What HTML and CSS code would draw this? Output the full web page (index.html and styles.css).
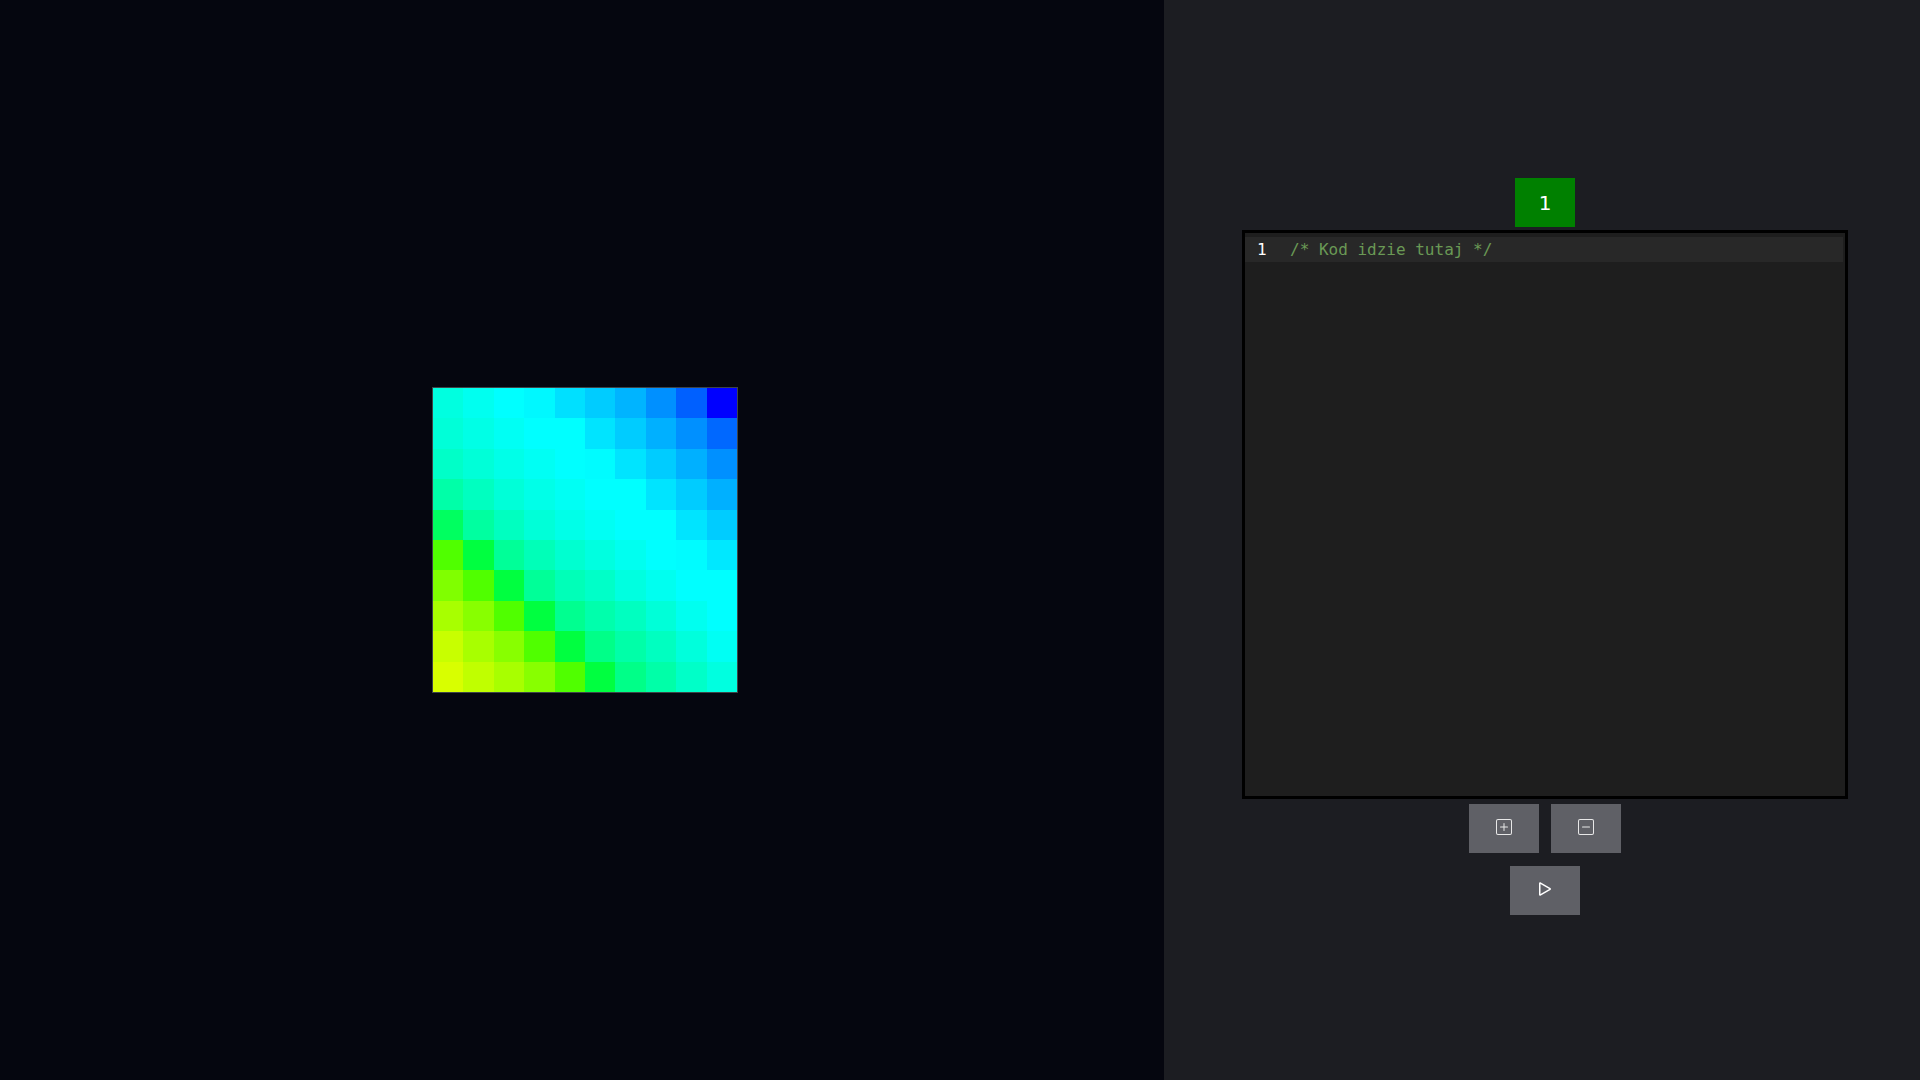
FILE: index.html
```html
<!DOCTYPE html>
<html lang="pl">
<head>
<meta charset="utf-8">
<title>Matryca</title>
<link rel="stylesheet" href="styles.css">
</head>
<body>
<div class="app">
  <section class="stage">
    <div class="matrix">
      <div class="cell" style="background:#00ffe0"></div><div class="cell" style="background:#00fff0"></div><div class="cell" style="background:#00ffff"></div><div class="cell" style="background:#00f8ff"></div><div class="cell" style="background:#00e0ff"></div><div class="cell" style="background:#00ccff"></div><div class="cell" style="background:#00b4ff"></div><div class="cell" style="background:#0090ff"></div><div class="cell" style="background:#0060ff"></div><div class="cell" style="background:#0000ff"></div>
      <div class="cell" style="background:#00ffd8"></div><div class="cell" style="background:#00ffe6"></div><div class="cell" style="background:#00fff4"></div><div class="cell" style="background:#00ffff"></div><div class="cell" style="background:#00ffff"></div><div class="cell" style="background:#00e4ff"></div><div class="cell" style="background:#00ccff"></div><div class="cell" style="background:#00b0ff"></div><div class="cell" style="background:#0090ff"></div><div class="cell" style="background:#0068ff"></div>
      <div class="cell" style="background:#00ffc8"></div><div class="cell" style="background:#00ffd8"></div><div class="cell" style="background:#00ffe8"></div><div class="cell" style="background:#00fff4"></div><div class="cell" style="background:#00ffff"></div><div class="cell" style="background:#00fcff"></div><div class="cell" style="background:#00e4ff"></div><div class="cell" style="background:#00ccff"></div><div class="cell" style="background:#00b0ff"></div><div class="cell" style="background:#0090ff"></div>
      <div class="cell" style="background:#00ffa8"></div><div class="cell" style="background:#00ffc0"></div><div class="cell" style="background:#00ffd8"></div><div class="cell" style="background:#00ffe8"></div><div class="cell" style="background:#00fff4"></div><div class="cell" style="background:#00ffff"></div><div class="cell" style="background:#00ffff"></div><div class="cell" style="background:#00e4ff"></div><div class="cell" style="background:#00ccff"></div><div class="cell" style="background:#00b0ff"></div>
      <div class="cell" style="background:#00ff60"></div><div class="cell" style="background:#00ffa0"></div><div class="cell" style="background:#00ffc0"></div><div class="cell" style="background:#00ffd8"></div><div class="cell" style="background:#00ffe8"></div><div class="cell" style="background:#00fff4"></div><div class="cell" style="background:#00ffff"></div><div class="cell" style="background:#00ffff"></div><div class="cell" style="background:#00e4ff"></div><div class="cell" style="background:#00ccff"></div>
      <div class="cell" style="background:#50ff00"></div><div class="cell" style="background:#00ff40"></div><div class="cell" style="background:#00ff98"></div><div class="cell" style="background:#00ffb8"></div><div class="cell" style="background:#00ffd0"></div><div class="cell" style="background:#00ffe0"></div><div class="cell" style="background:#00fff0"></div><div class="cell" style="background:#00ffff"></div><div class="cell" style="background:#00fcff"></div><div class="cell" style="background:#00e8ff"></div>
      <div class="cell" style="background:#80ff00"></div><div class="cell" style="background:#50ff00"></div><div class="cell" style="background:#00ff40"></div><div class="cell" style="background:#00ff98"></div><div class="cell" style="background:#00ffb8"></div><div class="cell" style="background:#00ffc8"></div><div class="cell" style="background:#00ffe0"></div><div class="cell" style="background:#00fff0"></div><div class="cell" style="background:#00ffff"></div><div class="cell" style="background:#00ffff"></div>
      <div class="cell" style="background:#a8ff00"></div><div class="cell" style="background:#88ff00"></div><div class="cell" style="background:#50ff00"></div><div class="cell" style="background:#00ff40"></div><div class="cell" style="background:#00ff90"></div><div class="cell" style="background:#00ffac"></div><div class="cell" style="background:#00ffc0"></div><div class="cell" style="background:#00ffd8"></div><div class="cell" style="background:#00fff0"></div><div class="cell" style="background:#00ffff"></div>
      <div class="cell" style="background:#c8ff00"></div><div class="cell" style="background:#a8ff00"></div><div class="cell" style="background:#88ff00"></div><div class="cell" style="background:#50ff00"></div><div class="cell" style="background:#00ff40"></div><div class="cell" style="background:#00ff88"></div><div class="cell" style="background:#00ffa8"></div><div class="cell" style="background:#00ffc0"></div><div class="cell" style="background:#00ffdc"></div><div class="cell" style="background:#00fff4"></div>
      <div class="cell" style="background:#d8ff00"></div><div class="cell" style="background:#c0ff00"></div><div class="cell" style="background:#a8ff00"></div><div class="cell" style="background:#88ff00"></div><div class="cell" style="background:#50ff00"></div><div class="cell" style="background:#00ff40"></div><div class="cell" style="background:#00ff88"></div><div class="cell" style="background:#00ffa8"></div><div class="cell" style="background:#00ffc8"></div><div class="cell" style="background:#00ffe0"></div>
    </div>
  </section>
  <section class="side">
    <div class="level">1</div>
    <div class="editor">
      <div class="line current"><span class="ln">1</span><span class="comment">/* Kod idzie tutaj */</span></div>
    </div>
    <div class="zoom-row">
      <button class="btn" type="button" aria-label="Powiększ">
        <svg class="icon-sq" viewBox="0 0 16 16" width="16" height="16" fill="currentColor"><path d="M14 1a1 1 0 0 1 1 1v12a1 1 0 0 1-1 1H2a1 1 0 0 1-1-1V2a1 1 0 0 1 1-1h12zM2 0a2 2 0 0 0-2 2v12a2 2 0 0 0 2 2h12a2 2 0 0 0 2-2V2a2 2 0 0 0-2-2H2z"/><path d="M8 4a.5.5 0 0 1 .5.5v3h3a.5.5 0 0 1 0 1h-3v3a.5.5 0 0 1-1 0v-3h-3a.5.5 0 0 1 0-1h3v-3A.5.5 0 0 1 8 4z"/></svg>
      </button>
      <button class="btn" type="button" aria-label="Pomniejsz">
        <svg class="icon-sq" viewBox="0 0 16 16" width="16" height="16" fill="currentColor"><path d="M14 1a1 1 0 0 1 1 1v12a1 1 0 0 1-1 1H2a1 1 0 0 1-1-1V2a1 1 0 0 1 1-1h12zM2 0a2 2 0 0 0-2 2v12a2 2 0 0 0 2 2h12a2 2 0 0 0 2-2V2a2 2 0 0 0-2-2H2z"/><path d="M4 8a.5.5 0 0 1 .5-.5h7a.5.5 0 0 1 0 1h-7A.5.5 0 0 1 4 8z"/></svg>
      </button>
    </div>
    <button class="btn play" type="button" aria-label="Uruchom">
      <svg class="icon-play" viewBox="0 0 16 16" width="24" height="24" fill="currentColor"><path d="M10.804 8 5 4.633v6.734L10.804 8zm.792-.696a.802.802 0 0 1 0 1.392l-6.363 3.692C4.713 12.69 4 12.345 4 11.692V4.308c0-.653.713-.998 1.233-.696l6.363 3.692z"/></svg>
    </button>
  </section>
</div>
</body>
</html>
```
FILE: styles.css
```css
html, body {
  margin: 0;
  padding: 0;
  height: 100%;
}

body {
  font-family: "DejaVu Sans", "Liberation Sans", sans-serif;
  background: #1c1d22;
}

.app {
  display: flex;
  width: 100%;
  height: 100vh;
}

.stage {
  width: 1164px;
  flex: 0 0 1164px;
  background: #05060f;
  display: flex;
  align-items: center;
  justify-content: center;
  padding-left: 6px;
  box-sizing: border-box;
}

.matrix {
  width: 306px;
  height: 306px;
  box-sizing: border-box;
  border: 1px solid rgba(110, 120, 120, 0.55);
  display: grid;
  grid-template-columns: repeat(10, 1fr);
  grid-template-rows: repeat(10, 1fr);
}

.side {
  flex: 1;
  background: #1c1d22;
  display: flex;
  flex-direction: column;
  align-items: center;
  padding-top: 178px;
  padding-left: 6px;
  box-sizing: border-box;
}

.level {
  width: 60px;
  height: 49px;
  background: #008000;
  color: #ffffff;
  font-family: "DejaVu Sans", sans-serif;
  font-size: 20px;
  display: flex;
  align-items: center;
  justify-content: center;
}

.editor {
  margin-top: 3px;
  width: 600px;
  height: 559px;
  padding-top: 4px;
  border: 3px solid #000000;
  background: #1e1e1e;
}

.line {
  height: 25px;
  margin-right: 2px;
  display: flex;
  align-items: center;
  font-family: "DejaVu Sans Mono", "Liberation Mono", monospace;
  font-size: 16px;
}

.line.current {
  background: #282828;
}

.ln {
  width: 33px;
  padding-left: 12px;
  color: #ffffff;
}

.comment {
  color: #6a9955;
}

.zoom-row {
  margin-top: 5px;
  display: flex;
  gap: 12px;
}

.btn {
  width: 70px;
  height: 49px;
  padding: 0 0 4px 0;
  border: 0;
  background: #5f6066;
  color: #e8e8e8;
  display: flex;
  align-items: center;
  justify-content: center;
  cursor: pointer;
}

.btn.play {
  margin-top: 13px;
  color: #ffffff;
}
```
